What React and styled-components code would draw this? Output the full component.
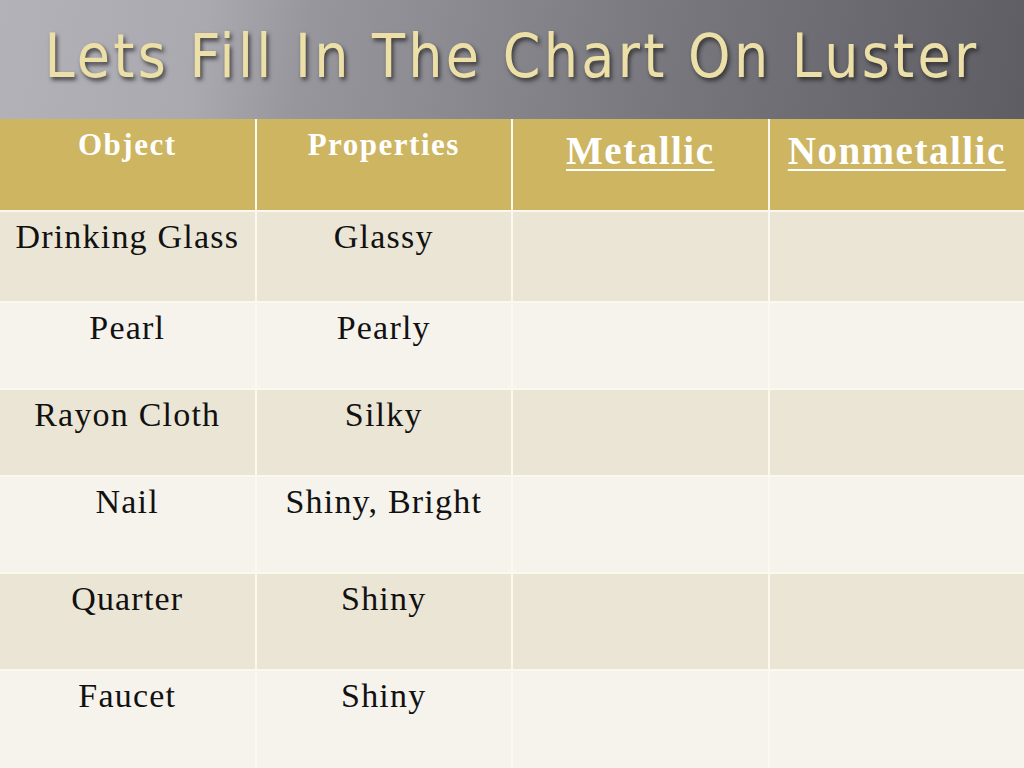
import React from 'react';
import styled, { createGlobalStyle } from 'styled-components';

const GlobalStyle = createGlobalStyle`
  html, body {
    margin: 0;
    padding: 0;
    width: 1024px;
    height: 768px;
    overflow: hidden;
    background: #f5f3ec;
  }
`;

const Slide = styled.div`
  width: 1024px;
  height: 768px;
  display: grid;
  grid-template-rows: 119px 1fr;
`;

const TitleBar = styled.div`
  background: linear-gradient(100deg, #b4b2b9 0%, #aaa9af 20%, #97969c 30%, #8d8c92 42%, #78777d 65%, #5e5d63 100%);
  display: flex;
  align-items: center;
  justify-content: center;
  padding-bottom: 8px;
  h1 {
    margin: 0;
    font-family: 'Liberation Sans Narrow', 'DejaVu Sans Condensed', 'Liberation Sans', sans-serif;
    font-weight: 400;
    font-size: 60px;
    letter-spacing: 3.3px;
    color: #ece0a8;
    text-shadow: 2px 3px 4px rgba(30, 30, 30, 0.75);
  }
`;

const Chart = styled.div`
  display: grid;
  grid-template-columns: repeat(4, 1fr);
  grid-template-rows: 91px 89px 85px 85px 95px 95px 97px;
  gap: 2px;
  background: #fbf8ee;
`;

const HeadCell = styled.div`
  background: #cdb562;
  color: #ffffff;
  font-family: 'Liberation Serif', 'DejaVu Serif', serif;
  font-weight: 700;
  text-align: center;
  font-size: ${(p) => (p.big ? '39px' : '31px')};
  letter-spacing: 1.5px;
  padding-top: ${(p) => (p.big ? '9px' : '8px')};
  text-decoration: ${(p) => (p.big ? 'underline' : 'none')};
  text-decoration-thickness: 2px;
  text-underline-offset: 5px;
`;

const Cell = styled.div`
  background: ${(p) => (p.odd ? '#ebe5d5' : '#f5f3ec')};
  color: #111111;
  font-family: 'Liberation Serif', 'DejaVu Serif', serif;
  font-size: 34px;
  letter-spacing: 1.2px;
  text-align: center;
  padding-top: 6px;
`;

const rows = [
  ['Drinking Glass', 'Glassy'],
  ['Pearl', 'Pearly'],
  ['Rayon Cloth', 'Silky'],
  ['Nail', 'Shiny, Bright'],
  ['Quarter', 'Shiny'],
  ['Faucet', 'Shiny'],
];

export default function App() {
  return (
    <>
      <GlobalStyle />
      <Slide>
        <TitleBar>
          <h1>Lets Fill In The Chart On Luster</h1>
        </TitleBar>
        <Chart>
          <HeadCell>Object</HeadCell>
          <HeadCell>Properties</HeadCell>
          <HeadCell big>Metallic</HeadCell>
          <HeadCell big>Nonmetallic</HeadCell>
          {rows.map(([obj, prop], i) => (
            <React.Fragment key={obj}>
              <Cell odd={i % 2 === 0}>{obj}</Cell>
              <Cell odd={i % 2 === 0}>{prop}</Cell>
              <Cell odd={i % 2 === 0} />
              <Cell odd={i % 2 === 0} />
            </React.Fragment>
          ))}
        </Chart>
      </Slide>
    </>
  );
}
